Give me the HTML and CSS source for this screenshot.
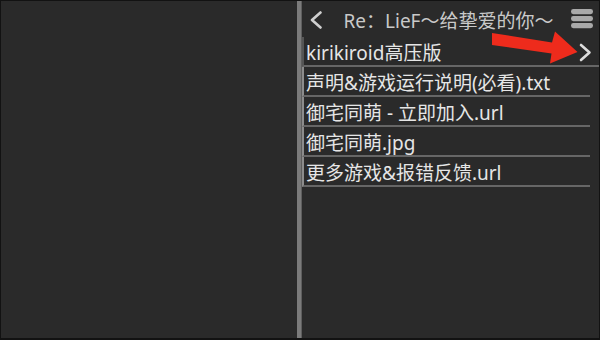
FILE: index.html
```html
<!DOCTYPE html>
<html lang="zh-CN">
<head>
<meta charset="utf-8">
<title>Kirikiroid file browser</title>
<link rel="stylesheet" href="styles.css">
</head>
<body>
<div class="screen">
  <div class="left-pane"></div>
  <div class="divider"></div>
  <div class="panel">
    <div class="header">
      <svg class="back" width="14" height="18" viewBox="0 0 14 18"><path d="M11.5 1.5 L3 9 L11.5 16.5" fill="none" stroke="#cfcfcf" stroke-width="2.6" stroke-linecap="round" stroke-linejoin="round"/></svg>
      <div class="title">Re：LieF～给挚爱的你～</div>
      <svg class="menu" width="22" height="20" viewBox="0 0 22 20"><rect x="0" y="0" width="22" height="5.2" rx="2.4" fill="#a9a9a9"/><rect x="0" y="7" width="22" height="5.2" rx="2.4" fill="#a9a9a9"/><rect x="0" y="14" width="22" height="5.2" rx="2.4" fill="#a9a9a9"/></svg>
    </div>
    <div class="list">
      <div class="row folder"><span class="name">kirikiroid高压版</span><svg class="chev" width="13" height="19" viewBox="0 0 13 19"><path d="M2 2 L10.5 9.5 L2 17" fill="none" stroke="#dcdcdc" stroke-width="2.6" stroke-linecap="round" stroke-linejoin="round"/></svg></div>
      <div class="row"><span class="name">声明&amp;游戏运行说明(必看).txt</span></div>
      <div class="row"><span class="name">御宅同萌 - 立即加入.url</span></div>
      <div class="row"><span class="name">御宅同萌.jpg</span></div>
      <div class="row"><span class="name">更多游戏&amp;报错反馈.url</span></div>
    </div>
    <svg class="arrow" width="92" height="36" viewBox="490 30 92 36"><polygon points="493,33 553,42.5 556,31.5 578.5,52 551,63.5 552.5,53.5 493,45" fill="#ee2b1c"/></svg>
  </div>
</div>
</body>
</html>
```
FILE: styles.css
```css
* { box-sizing: border-box; }
html, body { margin: 0; padding: 0; background: #2a2a2a; }
.screen {
  width: 600px;
  height: 340px;
  display: flex;
  background: #2a2a2a;
  border: 1px solid #121212;
  border-bottom-width: 2px;
  font-family: "Noto Sans", "Noto Sans CJK SC", sans-serif;
  overflow: hidden;
}
.left-pane { width: 296px; flex: none; }
.divider {
  width: 5px;
  flex: none;
  background: #7b7b7b;
  border-right: 1px solid #5e5e5e;
}
.panel {
  flex: 1;
  position: relative;
  display: flex;
  flex-direction: column;
}
.header {
  height: 36px;
  flex: none;
  display: flex;
  align-items: center;
  padding: 0 6px 0 7px;
}
.back { flex: none; margin-top: 2px; }
.title {
  flex: 1;
  text-align: center;
  color: #c9c9c9;
  font-size: 19px;
  white-space: nowrap;
  margin-top: 2px;
  padding-left: 3px;
}
.menu { flex: none; }
.list {
  display: flex;
  flex-direction: column;
  margin-right: 9px;
}
.row {
  height: 30px;
  display: flex;
  align-items: center;
  border-left: 2px solid #8c8c8c;
  border-bottom: 2px solid #666;
  padding: 2px 0 0 2px;
  color: #e6e6e6;
  font-size: 19px;
  white-space: nowrap;
}
.row.folder { justify-content: space-between; margin-right: -9px; padding-right: 7px; border-left-color: #555; }
.chev { flex: none; }
.arrow {
  position: absolute;
  left: 187px;
  top: 29px;
}
```
